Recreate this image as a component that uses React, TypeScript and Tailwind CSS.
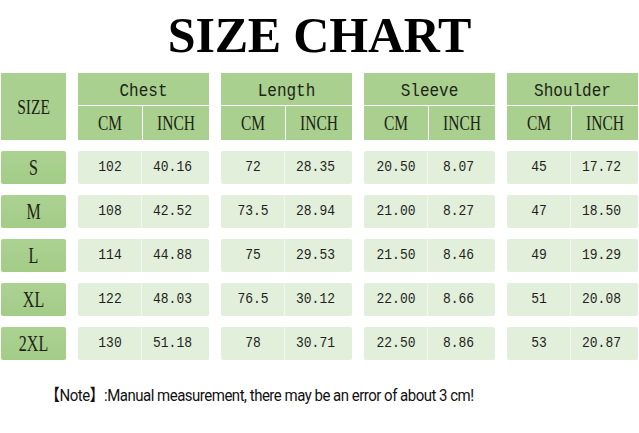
import React from "react";

const groups = ["Chest", "Length", "Sleeve", "Shoulder"];

const rows = [
  { size: "S", vals: ["102", "40.16", "72", "28.35", "20.50", "8.07", "45", "17.72"] },
  { size: "M", vals: ["108", "42.52", "73.5", "28.94", "21.00", "8.27", "47", "18.50"] },
  { size: "L", vals: ["114", "44.88", "75", "29.53", "21.50", "8.46", "49", "19.29"] },
  { size: "XL", vals: ["122", "48.03", "76.5", "30.12", "22.00", "8.66", "51", "20.08"] },
  { size: "2XL", vals: ["130", "51.18", "78", "30.71", "22.50", "8.86", "53", "20.87"] },
];

const mono = "font-['Liberation_Mono',monospace]";
const serif = "font-['Liberation_Serif',serif]";

// tall, narrow caps like the original SimSun labels
function Label({ children, size = "text-[15.5px]" }: { children: React.ReactNode; size?: string }) {
  return <span className={`inline-block scale-y-[1.4] ${serif} ${size}`}>{children}</span>;
}

export default function App() {
  return (
    <div className="w-[639px] h-[433px] bg-white overflow-hidden">
      {/* Title */}
      <div className="h-[73px] flex items-center justify-center pb-[3px]">
        <h1 className={`${serif} font-bold text-[50px] leading-none text-black tracking-[-0.2px]`}>SIZE CHART</h1>
      </div>

      {/* Header */}
      <div className="pl-px grid grid-cols-[65px_131px_131px_131px_131px] gap-x-3 text-[#1c2416]">
        <div className="h-[67px] bg-[#a9d08e] flex items-center justify-center">
          <Label>SIZE</Label>
        </div>
        {groups.map((g) => (
          <div key={g} className="h-[67px] flex flex-col bg-[#a9d08e]">
            <div className="h-[33px] flex items-center justify-center border-b border-white">
              <span className={`inline-block scale-y-[1.15] pt-[3px] text-[16px] ${mono}`}>{g}</span>
            </div>
            <div className="flex-1 flex">
              <div className="w-[65px] flex items-center justify-center border-r border-white">
                <Label>CM</Label>
              </div>
              <div className="flex-1 flex items-center justify-center">
                <Label>INCH</Label>
              </div>
            </div>
          </div>
        ))}
      </div>

      {/* Data rows */}
      <div className="pl-px mt-[11px] flex flex-col gap-[11px] text-[#1f1f1f]">
        {rows.map((r) => (
          <div key={r.size} className="grid grid-cols-[65px_131px_131px_131px_131px] gap-x-3 h-[33px]">
            <div className="rounded-[2px] bg-gradient-to-b from-[#acd292] to-[#a3cc87] flex items-center justify-center text-[#1c2416]">
              <Label size="text-[16px]">{r.size}</Label>
            </div>
            {[0, 2, 4, 6].map((i) => (
              <div key={i} className={`rounded-[2px] bg-[#e2efda] flex text-[13px] ${mono}`}>
                <div className="w-[64px] flex items-center justify-center border-r border-[#f3f8ef] pl-px">
                  <span className="inline-block scale-y-110">{r.vals[i]}</span>
                </div>
                <div className="flex-1 flex items-center justify-center pr-[6px]">
                  <span className="inline-block scale-y-110">{r.vals[i + 1]}</span>
                </div>
              </div>
            ))}
          </div>
        ))}
      </div>

      {/* Note */}
      <div className="pl-[45px] pt-[29px] font-['Roboto','Noto_Sans_CJK_SC',sans-serif] text-[15px] tracking-[-0.5px] text-[#111] leading-none">
        <span className="inline-block scale-y-110 origin-left">
          【Note】:Manual measurement, there may be an error of about 3 cm!
        </span>
      </div>
    </div>
  );
}
